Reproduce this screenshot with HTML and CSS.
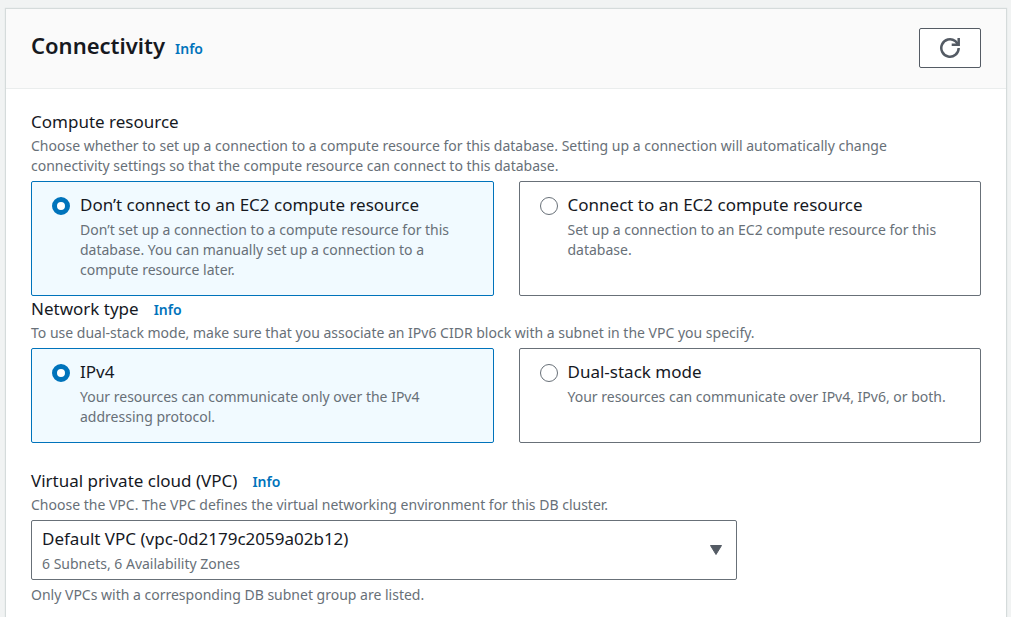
FILE: index.html
```html
<!DOCTYPE html>
<html lang="en">
<head>
<meta charset="utf-8">
<meta name="viewport" content="width=device-width, initial-scale=1">
<title>Connectivity</title>
<link rel="stylesheet" href="styles.css">
</head>
<body>
<main class="panel">
  <header class="panel-header">
    <div class="heading">
      <h2 class="title">Connectivity</h2>
      <a class="info" href="#">Info</a>
    </div>
    <button class="refresh" type="button" aria-label="Refresh">
      <svg class="refresh-icon" viewBox="0 0 22 22" aria-hidden="true">
        <path d="M19.700 11a8.700 8.700 0 1 1-3.500-7l2.300 2.500" fill="none" stroke="currentColor" stroke-width="2.500"/>
        <path d="M19.700 1v6.800h-7" fill="none" stroke="currentColor" stroke-width="2.500"/>
        <path d="M16 7.500l3.500-3.500v4z" fill="currentColor"/>
      </svg>
    </button>
  </header>
  <form class="panel-body">
    <section class="field" role="radiogroup" aria-labelledby="compute-label">
      <div class="label-row"><span class="label" id="compute-label">Compute resource</span></div>
      <p class="description">Choose whether to set up a connection to a compute resource for this database. Setting up a connection will automatically change connectivity settings so that the compute resource can connect to this database.</p>
      <div class="tiles">
        <label class="tile">
          <input class="radio" type="radio" name="compute" checked>
          <span class="tile-text">
            <span class="label">Don’t connect to an EC2 compute resource</span>
            <span class="tile-description">Don’t set up a connection to a compute resource for this database. You can manually set up a connection to a compute resource later.</span>
          </span>
        </label>
        <label class="tile">
          <input class="radio" type="radio" name="compute">
          <span class="tile-text">
            <span class="label">Connect to an EC2 compute resource</span>
            <span class="tile-description">Set up a connection to an EC2 compute resource for this database.</span>
          </span>
        </label>
      </div>
    </section>
    <section class="field" role="radiogroup" aria-labelledby="network-label">
      <div class="label-row"><span class="label" id="network-label">Network type</span><a class="info" href="#">Info</a></div>
      <p class="description">To use dual-stack mode, make sure that you associate an IPv6 CIDR block with a subnet in the VPC you specify.</p>
      <div class="tiles">
        <label class="tile">
          <input class="radio" type="radio" name="network" checked>
          <span class="tile-text">
            <span class="label">IPv4</span>
            <span class="tile-description">Your resources can communicate only over the IPv4 addressing protocol.</span>
          </span>
        </label>
        <label class="tile">
          <input class="radio" type="radio" name="network">
          <span class="tile-text">
            <span class="label">Dual-stack mode</span>
            <span class="tile-description">Your resources can communicate over IPv4, IPv6, or both.</span>
          </span>
        </label>
      </div>
    </section>
    <section class="field field-vpc">
      <div class="label-row"><label class="label" for="vpc">Virtual private cloud (VPC)</label><a class="info" href="#">Info</a></div>
      <p class="description">Choose the VPC. The VPC defines the virtual networking environment for this DB cluster.</p>
      <div class="select-box">
        <select class="select" id="vpc" aria-describedby="vpc-detail vpc-hint">
          <option>Default VPC (vpc-0d2179c2059a02b12)</option>
        </select>
        <span class="select-detail" id="vpc-detail">6 Subnets, 6 Availability Zones</span>
        <svg class="caret" viewBox="0 0 14 12" aria-hidden="true"><path d="M1.500 1.500h11L7 10.500z" fill="currentColor" stroke="currentColor" stroke-linejoin="round"/></svg>
      </div>
      <p class="hint" id="vpc-hint">Only VPCs with a corresponding DB subnet group are listed.</p>
    </section>
  </form>
</main>
</body>
</html>
```

FILE: styles.css
```css
* {
  box-sizing: border-box;
}

body {
  margin: 0;
  padding: 9px 5px 0 6px;
  background: #f1f3f3;
  color: #16191f;
  font-family: "Noto Sans", "Open Sans", sans-serif;
  font-size: 14px;
  line-height: 20px;
}

.panel {
  background: #fff;
  box-shadow: 0 0 1px 1px #d5dbdb, 0 1px 1px 0 #aab7b8;
}

.panel-header {
  display: flex;
  align-items: flex-start;
  justify-content: space-between;
  padding: 19px 25px 20px;
  border-bottom: 1px solid #eaeded;
  background: #fafafa;
}

.heading {
  display: flex;
  align-items: baseline;
  gap: 10px;
  padding-top: 1px;
}

.title {
  margin: 0;
  font-size: 22px;
  font-weight: 600;
  line-height: 32px;
}

.info {
  color: #0073bb;
  font-weight: 600;
  text-decoration: none;
}

.refresh {
  display: flex;
  align-items: center;
  justify-content: center;
  width: 62px;
  height: 40px;
  padding: 0;
  border: 1px solid #545b64;
  border-radius: 2px;
  background: #fff;
  color: #545b64;
}

.refresh-icon {
  width: 22px;
  height: 22px;
}

.panel-body {
  padding: 21px 25px 12px;
}

.field + .field {
  margin-top: 1px;
}

.field + .field-vpc {
  margin-top: 26px;
}

.label-row {
  display: flex;
  align-items: baseline;
  gap: 15px;
}

.label {
  font-size: 17px;
  line-height: 24px;
}

.description {
  max-width: 900px;
  margin: 2px 0 5px;
  color: #687078;
}

.tiles {
  display: grid;
  grid-template-columns: 1fr 1fr;
  gap: 25px;
}

.tile {
  display: flex;
  gap: 10px;
  padding: 11px 20px 15px;
  border: 1px solid #687078;
  border-radius: 2px;
}

.tile:has(.radio:checked) {
  border-color: #0073bb;
  background: #f1faff;
}

.radio {
  flex: none;
  width: 18px;
  height: 18px;
  margin: 4px 0 0;
  appearance: none;
  border: 1px solid #687078;
  border-radius: 50%;
  background: #fff;
}

.radio:checked {
  border: 5px solid #0073bb;
}

.tile-text {
  display: flex;
  flex-direction: column;
  gap: 3px;
}

.tile-description {
  color: #687078;
}

.select-box {
  display: grid;
  grid-template-columns: 1fr auto;
  width: 75%;
  max-width: 706px;
  height: 60px;
}

.select {
  grid-area: 1 / 1 / 2 / 3;
  width: 100%;
  padding: 0 40px 24px 10px;
  appearance: none;
  border: 1px solid #687078;
  border-radius: 2px;
  background: #fff;
  color: #16191f;
  font-family: inherit;
  font-size: 17px;
}

.select-detail {
  grid-area: 1 / 1 / 2 / 2;
  align-self: end;
  padding: 0 0 6px 11px;
  color: #687078;
  pointer-events: none;
}

.caret {
  grid-area: 1 / 2 / 2 / 3;
  align-self: center;
  width: 14px;
  height: 12px;
  margin-right: 14px;
  color: #545b64;
  pointer-events: none;
}

.hint {
  margin: 5px 0 0;
  color: #687078;
}
```
